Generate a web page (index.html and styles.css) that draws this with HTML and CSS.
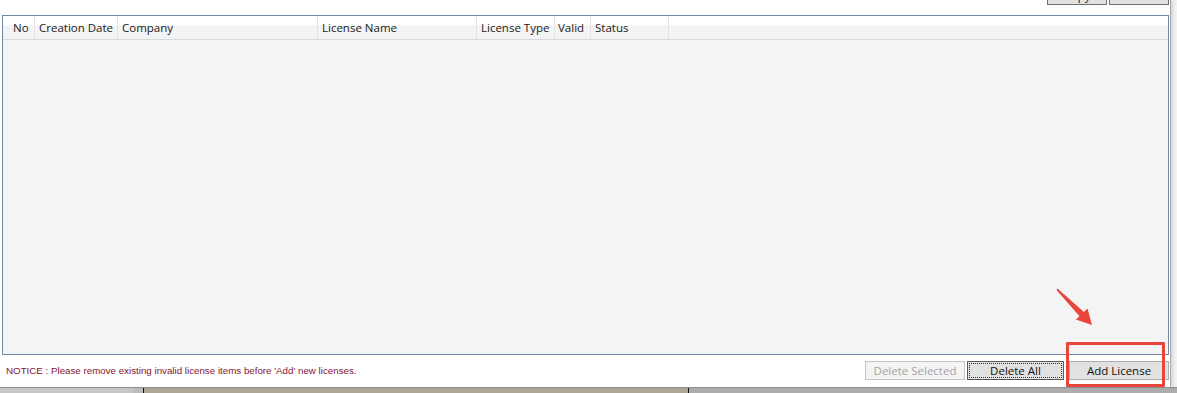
FILE: index.html
```html
<!DOCTYPE html>
<html>
<head>
<meta charset="utf-8">
<link rel="stylesheet" href="styles.css">
</head>
<body>
<div class="screen">
  <div class="window">
    <div class="topbar">
      <button class="tbtn">Copy</button>
      <button class="tbtn">Close</button>
    </div>
    <div class="grid">
      <div class="header">
        <div class="col c-no">No</div>
        <div class="col c-date">Creation Date</div>
        <div class="col c-company">Company</div>
        <div class="col c-name">License Name</div>
        <div class="col c-type">License Type</div>
        <div class="col c-valid">Valid</div>
        <div class="col c-status">Status</div>
        <div class="col-fill"></div>
      </div>
      <div class="rows"></div>
    </div>
    <div class="footer">
      <span class="notice">NOTICE : Please remove existing invalid license items before 'Add' new licenses.</span>
      <div class="actions">
        <button class="btn btn-disabled" disabled>Delete Selected</button>
        <button class="btn btn-focus"><span class="focus-ring">Delete All</span></button>
        <button class="btn btn-add">Add License</button>
      </div>
    </div>
  </div>
  <div class="desktop">
    <div class="seg seg-a"></div>
    <div class="seg seg-b"></div>
    <div class="seg seg-c"></div>
    <div class="seg seg-d"></div>
  </div>
  <div class="highlight"></div>
  <svg class="arrow" width="1177" height="393" viewBox="0 0 1177 393">
    <polygon points="1057.5,288.5 1083.9,312.0 1087.5,308.6 1092,325 1075.9,319.6 1079.5,316.2 1056.5,290" fill="#e8453c"/>
  </svg>
</div>
</body>
</html>
```

FILE: styles.css
```css
html, body {
  margin: 0;
  padding: 0;
  background: #ffffff;
}

.screen {
  position: relative;
  width: 1177px;
  height: 393px;
  overflow: hidden;
  font-family: "Open Sans", "Noto Sans", sans-serif;
  background: #f2f2f2;
}

.window {
  width: 1171px;
  height: 387px;
  background: #ffffff;
  border-right: 1px solid #a8a8a8;
  box-shadow: 2px 0 3px rgba(0,0,0,0.12);
  display: flex;
  flex-direction: column;
  padding-left: 2px;
  box-sizing: border-box;
}

.topbar {
  height: 5px;
  display: flex;
  justify-content: flex-end;
  gap: 2px;
  padding-right: 1px;
  overflow: hidden;
  align-items: flex-end;
}

.tbtn {
  flex: none;
  width: 60px;
  height: 24px;
  margin: 0;
  padding: 7px 0 0 0;
  background: #e1e1e1;
  border: 1px solid #707070;
  font-family: "Open Sans", sans-serif;
  font-size: 11.5px;
  color: #1a1a1a;
  line-height: 14px;
  box-sizing: border-box;
  display: flex;
  justify-content: center;
  align-items: flex-start;
}

.grid {
  margin-top: 10px;
  width: 1167px;
  height: 340px;
  border: 1px solid #7089aa;
  box-sizing: border-box;
  background: #f4f4f4;
  display: flex;
  flex-direction: column;
}

.header {
  height: 24px;
  flex: none;
  display: flex;
  background: linear-gradient(to bottom, #ffffff 0%, #ffffff 40%, #f3f3f4 42%, #f2f3f4 100%);
  border-bottom: 1px solid #d9d9d9;
  box-sizing: border-box;
}

.col {
  flex: none;
  box-sizing: border-box;
  border-right: 1px solid #e2e2e4;
  padding-left: 4px;
  padding-top: 1px;
  font-size: 11.5px;
  line-height: 22px;
  color: #1b1b1b;
  white-space: nowrap;
  overflow: hidden;
}

.c-no { width: 32px; padding-left: 10px; }
.c-date { width: 83px; }
.c-company { width: 200px; }
.c-name { width: 159px; }
.c-type { width: 78px; }
.c-valid { width: 36px; padding-left: 3px; }
.c-status { width: 78px; }
.col-fill { flex: 1; }

.rows {
  flex: 1;
}

.footer {
  flex: 1;
  display: flex;
  align-items: center;
  justify-content: space-between;
  width: 1167px;
  padding-bottom: 1px;
  box-sizing: border-box;
}

.notice {
  padding-left: 4px;
  font-family: "Liberation Sans", Arial, sans-serif;
  font-size: 9.75px;
  color: #851535;
}

.actions {
  display: flex;
  align-items: center;
}

.btn {
  height: 19px;
  margin: 0;
  padding: 0;
  box-sizing: border-box;
  font-family: "Open Sans", sans-serif;
  font-size: 11.5px;
  line-height: 17px;
  color: #111111;
  background: #e1e1e1;
  border: 1px solid #adadad;
  display: flex;
  align-items: center;
  justify-content: center;
}

.btn-disabled {
  width: 100px;
  background: #f4f4f4;
  border-color: #c4c4c4;
  color: #a3a3a3;
}

.btn-focus {
  width: 97px;
  margin-left: 2px;
  border-color: #5a5a5a;
  padding: 1px;
}

.focus-ring {
  display: flex;
  align-items: center;
  justify-content: center;
  width: 100%;
  height: 100%;
  box-sizing: border-box;
  border: 1px dotted #333333;
}

.btn-add {
  width: 100px;
  margin-left: 5px;
}

.desktop {
  height: 6px;
  border-top: 1px solid #8e8e8e;
  box-sizing: border-box;
  display: flex;
}

.seg { height: 100%; }
.seg-a { width: 133px; background: #c6c6c6; }
.seg-b { width: 11px; background: #bcbcbc; border-right: 1px solid #111; box-sizing: border-box; }
.seg-c { width: 545px; background: #aca797; border-right: 1px solid #111; box-sizing: border-box; }
.seg-d { flex: 1; background: #acacac; }

.highlight {
  position: absolute;
  left: 1066px;
  top: 342px;
  width: 99px;
  height: 45px;
  border: 3px solid #e8453c;
  border-radius: 1px;
  box-sizing: border-box;
}

.arrow {
  position: absolute;
  left: 0;
  top: 0;
  pointer-events: none;
}
```
